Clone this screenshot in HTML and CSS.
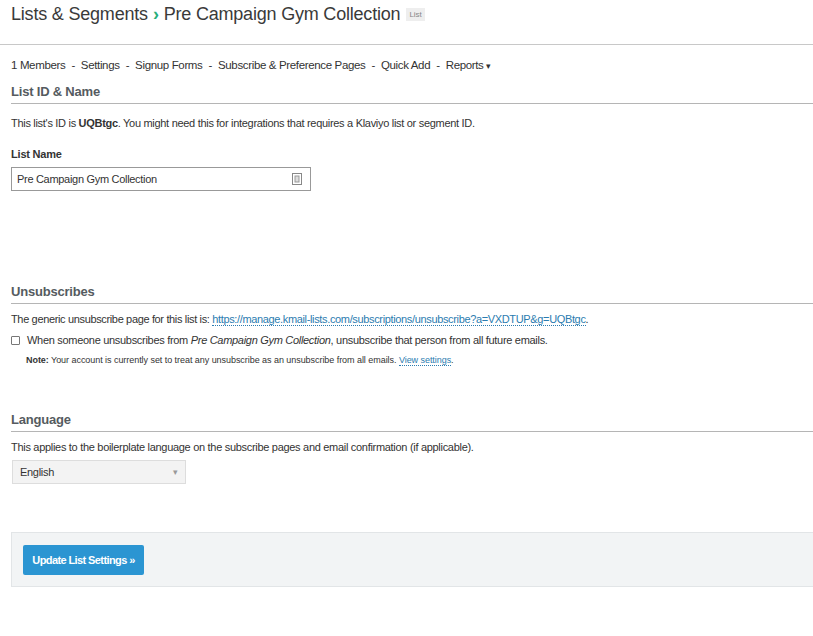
FILE: index.html
```html
<html>
  <head>
    <link rel="stylesheet" href="styles.css">
  </head>
  <body>
    <div class="page-header">
      <h1 class="crumbs">
        <span>Lists &amp; Segments</span>
        <span class="chevron">&rsaquo;</span>
        <span>Pre Campaign Gym Collection</span>
        <span class="tag">List</span>
      </h1>
    </div>

    <div class="content">
      <div class="subnav">
        <span>1 Members</span><span>-</span>
        <span>Settings</span><span>-</span>
        <span>Signup Forms</span><span>-</span>
        <span>Subscribe &amp; Preference Pages</span><span>-</span>
        <span>Quick Add</span><span>-</span>
        <span>Reports <span class="caret">&#9662;</span></span>
      </div>

      <!-- list id and name -->
      <div class="section">
        <h3 class="section-title">List ID &amp; Name</h3>
        <p class="text">This list's ID is <b>UQBtgc</b>. You might need this for integrations that requires a Klaviyo list or segment ID.</p>
        <label class="field-label">List Name</label>
        <div class="input-box">
          <span>Pre Campaign Gym Collection</span>
          <svg class="input-icon" width="10" height="12" viewBox="0 0 10 12">
            <rect x="0.5" y="0.5" width="9" height="11" fill="#fff" stroke="#888"/>
            <rect x="3" y="3" width="4" height="6" fill="#ddd" stroke="#999"/>
          </svg>
        </div>
      </div>

      <!-- unsubscribes -->
      <div class="section unsub">
        <h3 class="section-title">Unsubscribes</h3>
        <p class="text">The generic unsubscribe page for this list is: <a class="link" href="#">https://manage.kmail-lists.com/subscriptions/unsubscribe?a=VXDTUP&amp;g=UQBtgc</a>.</p>
        <div class="check-row">
          <span class="checkbox"></span>
          <span>When someone unsubscribes from <i>Pre Campaign Gym Collection</i>, unsubscribe that person from all future emails.</span>
        </div>
        <p class="note"><b>Note:</b> Your account is currently set to treat any unsubscribe as an unsubscribe from all emails. <a class="link" href="#">View settings</a>.</p>
      </div>

      <!-- language -->
      <div class="section lang">
        <h3 class="section-title">Language</h3>
        <p class="text">This applies to the boilerplate language on the subscribe pages and email confirmation (if applicable).</p>
        <div class="select-box">
          <span>English</span>
          <span class="select-caret">&#9662;</span>
        </div>
      </div>

      <div class="form-actions">
        <button class="btn-primary">Update List Settings &raquo;</button>
      </div>
    </div>
  </body>
</html>
```

FILE: styles.css
```css
body {
  margin: 0;
  font-family: "Liberation Sans", Arial, sans-serif;
  color: #333;
  background: #fff;
}

.page-header {
  height: 44px;
  border-bottom: 1px solid #c8c8c8;
}

.crumbs {
  margin: 0;
  padding: 4px 0 0 11px;
  font-size: 18px;
  letter-spacing: -0.2px;
  font-weight: normal;
  color: #3a3a3a;
  display: flex;
  align-items: center;
  gap: 5px;
}

.chevron {
  color: #27ae7a;
  font-weight: bold;
}

.tag {
  font-size: 8px;
  letter-spacing: 0;
  color: #888;
  background: #eee;
  padding: 2px 3px;
  margin-left: 1px;
}

.content {
  padding-left: 11px;
}

.subnav {
  margin-top: 14px;
  font-size: 11.5px;
  letter-spacing: -0.35px;
  color: #333;
  display: flex;
  gap: 6px;
}

.caret {
  font-size: 9px;
}

.section-title {
  margin: 13px 0 0;
  padding-bottom: 4px;
  font-size: 13px;
  letter-spacing: -0.2px;
  font-weight: bold;
  color: #555b60;
  border-bottom: 1px solid #b5b5b5;
}

.text {
  margin: 13px 0 0;
  font-size: 11px;
  letter-spacing: -0.3px;
  color: #333;
}

.field-label {
  display: block;
  margin-top: 19px;
  font-size: 11px;
  letter-spacing: -0.2px;
  font-weight: bold;
  color: #333;
}

.input-box {
  margin-top: 7px;
  height: 22px;
  border: 1px solid #999;
  display: flex;
  align-items: center;
  justify-content: space-between;
  padding: 0 8px 0 5px;
  font-size: 11px;
  letter-spacing: -0.3px;
  width: 285px;
}

.input-icon {
  display: block;
}

.unsub {
  margin-top: 93px;
}

.unsub .text {
  margin-top: 9px;
  letter-spacing: -0.35px;
}

.link {
  color: #2b7cb0;
  text-decoration: none;
  border-bottom: 1px dotted #2b7cb0;
}

.check-row {
  margin-top: 9px;
  display: flex;
  align-items: center;
  gap: 7px;
  font-size: 11px;
  letter-spacing: -0.3px;
}

.checkbox {
  width: 7px;
  height: 7px;
  border: 1px solid #777;
  border-radius: 1px;
}

.note {
  margin: 9px 0 0 15px;
  font-size: 9px;
  letter-spacing: -0.05px;
  color: #333;
}

.lang {
  margin-top: 47px;
}

.lang .text {
  margin-top: 9px;
}

.select-box {
  margin-top: 7px;
  margin-left: 1px;
  width: 158px;
  height: 22px;
  padding: 0 7px;
  background: #f3f3f3;
  border: 1px solid #ddd;
  display: flex;
  align-items: center;
  justify-content: space-between;
  font-size: 11px;
  letter-spacing: -0.3px;
}

.select-caret {
  font-size: 9px;
  color: #999;
}

.form-actions {
  margin-top: 48px;
  height: 53px;
  background: #f2f4f5;
  border: 1px solid #e2e5e7;
  border-right: none;
  display: flex;
  align-items: center;
  padding-left: 11px;
}

.btn-primary {
  background: #2b95d2;
  color: #fff;
  border: none;
  border-radius: 2px;
  height: 30px;
  width: 121px;
  font-family: "Liberation Sans", sans-serif;
  font-weight: bold;
  font-size: 11px;
  letter-spacing: -0.6px;
}
```
